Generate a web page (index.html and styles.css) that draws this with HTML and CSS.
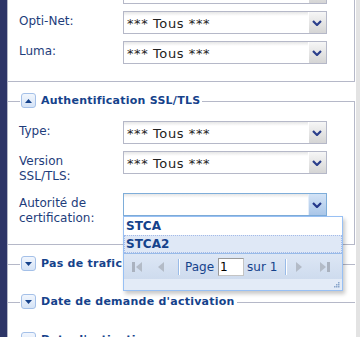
FILE: index.html
```html
<!DOCTYPE html>
<html lang="fr">
<head>
  <meta charset="UTF-8">
  <meta name="viewport" content="width=device-width, initial-scale=1.0">
  <title>Filtres</title>
  <link rel="stylesheet" href="styles.css">
</head>
<body>
  <div class="app">
    <div class="sidebar"></div>

    <main class="panel">
      <div class="form">
        <!-- first group, scrolled partly out of view -->
        <fieldset class="group">
          <div class="field">
            <label class="field-label"></label>
            <div class="combo">
              <div class="combo-input"></div>
              <div class="combo-trigger"><svg width="10" height="6" viewBox="0 0 10 6"><polyline points="1,1 5,5 9,1" fill="none" stroke="#2b3f8c" stroke-width="2.2"/></svg></div>
            </div>
          </div>
          <div class="field">
            <label class="field-label">Opti-Net:</label>
            <div class="combo">
              <div class="combo-input">*** Tous ***</div>
              <div class="combo-trigger"><svg width="10" height="6" viewBox="0 0 10 6"><polyline points="1,1 5,5 9,1" fill="none" stroke="#2b3f8c" stroke-width="2.2"/></svg></div>
            </div>
          </div>
          <div class="field">
            <label class="field-label">Luma:</label>
            <div class="combo">
              <div class="combo-input">*** Tous ***</div>
              <div class="combo-trigger"><svg width="10" height="6" viewBox="0 0 10 6"><polyline points="1,1 5,5 9,1" fill="none" stroke="#2b3f8c" stroke-width="2.2"/></svg></div>
            </div>
          </div>
        </fieldset>

        <fieldset class="group">
          <legend class="group-title">
            <span class="toggle"><svg width="7" height="4" viewBox="0 0 7 4"><polygon points="0,4 3.5,0 7,4" fill="#15428b"/></svg></span>
            Authentification SSL/TLS
          </legend>
          <div class="field">
            <label class="field-label">Type:</label>
            <div class="combo">
              <div class="combo-input">*** Tous ***</div>
              <div class="combo-trigger"><svg width="10" height="6" viewBox="0 0 10 6"><polyline points="1,1 5,5 9,1" fill="none" stroke="#2b3f8c" stroke-width="2.2"/></svg></div>
            </div>
          </div>
          <div class="field">
            <label class="field-label">Version SSL/TLS:</label>
            <div class="combo">
              <div class="combo-input">*** Tous ***</div>
              <div class="combo-trigger"><svg width="10" height="6" viewBox="0 0 10 6"><polyline points="1,1 5,5 9,1" fill="none" stroke="#2b3f8c" stroke-width="2.2"/></svg></div>
            </div>
          </div>
          <div class="field">
            <label class="field-label">Autorité de certification:</label>
            <div class="combo combo-focus">
              <div class="combo-input"></div>
              <div class="combo-trigger"><svg width="10" height="6" viewBox="0 0 10 6"><polyline points="1,1 5,5 9,1" fill="none" stroke="#23378a" stroke-width="2.2"/></svg></div>

              <div class="combo-list">
                <div class="combo-list-item">STCA</div>
                <div class="combo-list-item selected">STCA2</div>
                <div class="paging">
                  <svg class="tb-first" width="12" height="12" viewBox="0 0 12 12"><rect x="0" y="1" width="3" height="10" fill="#aab2bf"/><polygon points="10,1 4,6 10,11" fill="#b3bbc7"/></svg>
                  <svg class="tb-prev" width="6" height="12" viewBox="0 0 6 12"><polygon points="6,1 0,6 6,11" fill="#b3bbc7"/></svg>
                  <span class="tb-sep"></span>
                  <span class="tb-text tb-page">Page</span>
                  <input class="page-input" type="text" value="1">
                  <span class="tb-text tb-total">sur 1</span>
                  <span class="tb-sep tb-sep-right"></span>
                  <svg class="tb-next" width="6" height="12" viewBox="0 0 6 12"><polygon points="0,1 6,6 0,11" fill="#b3bbc7"/></svg>
                  <svg width="12" height="12" viewBox="0 0 12 12"><polygon points="1,1 7,6 1,11" fill="#b3bbc7"/><rect x="8" y="1" width="3" height="10" fill="#aab2bf"/></svg>
                </div>
                <div class="combo-list-foot">
                  <svg width="6" height="6" viewBox="0 0 6 6" fill="#8aa6cc"><rect x="4" y="0" width="1.5" height="1.5"/><rect x="2" y="2" width="1.5" height="1.5"/><rect x="4" y="2" width="1.5" height="1.5"/><rect x="0" y="4" width="1.5" height="1.5"/><rect x="2" y="4" width="1.5" height="1.5"/><rect x="4" y="4" width="1.5" height="1.5"/></svg>
                </div>
              </div>
            </div>
          </div>
        </fieldset>

        <fieldset class="group collapsed">
          <legend class="group-title">
            <span class="toggle"><svg width="7" height="4" viewBox="0 0 7 4"><polygon points="0,0 7,0 3.5,4" fill="#15428b"/></svg></span>
            Pas de trafic depuis
          </legend>
        </fieldset>

        <fieldset class="group collapsed">
          <legend class="group-title">
            <span class="toggle"><svg width="7" height="4" viewBox="0 0 7 4"><polygon points="0,0 7,0 3.5,4" fill="#15428b"/></svg></span>
            Date de demande d'activation
          </legend>
        </fieldset>

        <fieldset class="group collapsed">
          <legend class="group-title">
            <span class="toggle"><svg width="7" height="4" viewBox="0 0 7 4"><polygon points="0,0 7,0 3.5,4" fill="#15428b"/></svg></span>
            Date d'activation
          </legend>
        </fieldset>
      </div>
    </main>

    <div class="scroll-strip"></div>
  </div>
</body>
</html>
```

FILE: styles.css
```css
/* Reset */
* {
  margin: 0;
  padding: 0;
  box-sizing: border-box;
}

body {
  font-family: "DejaVu Sans", Verdana, sans-serif;
  font-size: 12px;
  color: #1e3d7b;
  background: #fff;
  overflow: hidden;
}

/* Page frame */
.app {
  display: flex;
  height: 337px;
  overflow: hidden;
}

.sidebar {
  width: 8px;
  flex: none;
  background: #2d3567;
  border-right: 1px solid #b5b8c8;
}

.panel {
  flex: 1;
  padding-right: 1px;
  overflow: hidden;
}

.scroll-strip {
  width: 4px;
  flex: none;
  background: #e3e3e3;
}

/* The form is scrolled down a little */
.form {
  margin-top: -32px;
}

/* Fieldsets */
.group {
  border: 1px solid #b5b8c8;
  border-left: none;
  padding: 12px 0 9px 11px;
  margin-bottom: 11px;
}

.group:first-child {
  padding-bottom: 10px;
}

.group.collapsed {
  border-width: 1px 0 0 0;
  padding: 11px 0 0 11px;
}

.group-title {
  display: flex;
  align-items: flex-start;
  gap: 5px;
  margin-left: 1px;
  padding: 0 2px 0 1px;
  font-size: 11px;
  font-weight: bold;
  line-height: 16px;
  letter-spacing: 0.25px;
  color: #15428b;
}

.toggle {
  width: 15px;
  height: 15px;
  display: flex;
  align-items: center;
  justify-content: center;
  border: 1px solid #a4c0e8;
  border-radius: 3px;
  background: linear-gradient(#f1f6fd, #d5e3f6);
}

/* Form rows */
.field {
  display: flex;
  margin-bottom: 7px;
}

.field-label {
  width: 104px;
  flex: none;
  min-height: 20px;
  padding: 3px 8px 2px 0;
  line-height: 15px;
}

.combo {
  position: relative;
  display: flex;
  width: 204px;
  height: 23px;
}

.combo-input {
  flex: 1;
  border: 1px solid #b5b8c8;
  border-right: none;
  background: linear-gradient(#e6e6e6, #fff 4px);
  padding: 2px 3px 0;
  font-size: 13px;
  line-height: 19px;
  letter-spacing: 0.6px;
  color: #222;
  white-space: nowrap;
  overflow: hidden;
}

.combo-trigger {
  width: 19px;
  flex: none;
  display: flex;
  align-items: center;
  justify-content: center;
  border: 1px solid #b5b8c8;
  border-left: none;
  background: linear-gradient(#f6f6f6, #d5d5d5);
  box-shadow: inset 1px 0 #fff;
}

.combo-focus .combo-input {
  border-color: #7eadd9;
}

.combo-focus .combo-trigger {
  border-color: #7eadd9;
  background: linear-gradient(#d3e3f6, #aac6e8);
  box-shadow: inset 1px 0 #e4eefa;
}

/* Drop-down list */
.combo-list {
  position: absolute;
  top: 100%;
  left: 0;
  width: 220px;
  border: 1px solid #98c0f4;
  background: #fff;
  box-shadow: 2px 3px 4px rgba(0, 0, 0, 0.22);
  z-index: 10;
}

.combo-list-item {
  padding: 1px;
  border: 1px dotted #fff;
  font-size: 12px;
  font-weight: bold;
  line-height: 14px;
  color: #15428b;
}

.combo-list-item.selected {
  background: #dfe8f6;
  border-color: #a3bae9;
}

/* Paging toolbar */
.paging {
  display: flex;
  align-items: center;
  height: 26px;
  padding-left: 8px;
  border-top: 1px solid #99bbe8;
  background: linear-gradient(#dde7f5, #cedbee);
  color: #15428b;
}

.tb-first,
.tb-prev {
  margin-right: 14px;
}

.tb-sep {
  width: 2px;
  height: 16px;
  border-left: 1px solid #99bbe8;
  border-right: 1px solid #fff;
  margin-right: 5px;
}

.tb-sep-right {
  margin-left: 8px;
  margin-right: 9px;
}

.tb-text {
  font-size: 12px;
  line-height: 16px;
}

.tb-page {
  margin-right: 4px;
}

.tb-total {
  margin-left: 3px;
}

.tb-next {
  margin-right: 17px;
}

.page-input {
  width: 26px;
  height: 18px;
  border: 1px solid #9a9a9a;
  border-bottom-color: #c4c4c4;
  border-right-color: #c4c4c4;
  padding-left: 1px;
  font-family: "DejaVu Sans", Verdana, sans-serif;
  font-size: 12px;
  color: #000;
  background: #fff;
  outline: none;
}

.combo-list-foot {
  height: 11px;
  display: flex;
  justify-content: flex-end;
  align-items: flex-end;
  padding: 0 2px 2px 0;
  background: #e3ebf7;
}
```
